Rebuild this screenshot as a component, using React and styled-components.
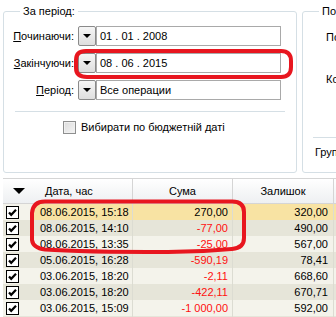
import React from "react";
import styled, { createGlobalStyle } from "styled-components";

const GlobalStyle = createGlobalStyle`
  html, body {
    margin: 0;
    padding: 0;
    background: #ffffff;
  }
`;

const Page = styled.div`
  position: relative;
  width: 336px;
  height: 317px;
  overflow: hidden;
  background: #ffffff;
  font-family: "Liberation Sans", Arial, sans-serif;
  font-size: 11px;
  color: #000;
  padding-left: 3px;
  box-sizing: border-box;
`;

const TopArea = styled.div`
  display: flex;
  gap: 5px;
  height: 169px;
  margin-top: 4px;
`;

const Group = styled.fieldset`
  margin: 0;
  padding: 0;
  border: 1px solid #d5dfe5;
  border-radius: 3px;
  box-sizing: border-box;
  height: 169px;
  width: ${(p) => p.$width}px;
  flex-shrink: 0;
  overflow: hidden;
`;

const Legend = styled.legend`
  margin-left: 16px;
  padding: 0 3px;
  line-height: 14px;
  font-size: 11px;
  white-space: nowrap;
`;

const FieldGrid = styled.div`
  display: grid;
  grid-template-columns: 74px 18px 185px;
  column-gap: 0;
  row-gap: 7px;
  margin-top: 8px;
`;

const Label = styled.label`
  text-align: right;
  padding-right: 4px;
  line-height: 20px;
  white-space: nowrap;
  overflow: hidden;

  u {
    text-decoration: underline;
    text-underline-offset: 1px;
  }
`;

const DropButton = styled.div`
  height: 20px;
  box-sizing: border-box;
  border: 1px solid #8a8a8a;
  border-radius: 2px;
  background: linear-gradient(#f6f6f6, #dedede);
  display: flex;
  align-items: center;
  justify-content: center;

  &::after {
    content: "";
    border-left: 4px solid transparent;
    border-right: 4px solid transparent;
    border-top: 4px solid #000;
  }
`;

const Field = styled.div`
  height: 20px;
  box-sizing: border-box;
  border: 1px solid #a9a9a9;
  background: #fff;
  padding-left: 3px;
  line-height: 18px;
  white-space: nowrap;
`;

const Separator = styled.div`
  height: 1px;
  background: #d5dfe5;
  margin: ${(p) => p.$margin};
`;

const CheckRow = styled.div`
  display: flex;
  align-items: center;
  gap: 5px;
  margin: 9px 0 0 59px;
  line-height: 13px;
`;

const CheckBox = styled.span`
  width: 13px;
  height: 13px;
  box-sizing: border-box;
  border: 1px solid #8e8f8f;
  background: linear-gradient(135deg, #dcdcdc, #f4f4f4);
  box-shadow: inset 0 0 0 1px #f0f0f0;
`;

const SideContent = styled.div`
  display: flex;
  flex-direction: column;
`;

const SideLabel = styled.div`
  white-space: nowrap;
  line-height: 14px;
  margin: ${(p) => p.$margin};
`;

const Table = styled.div`
  margin-top: 5px;
  width: 340px;
`;

const HeaderRow = styled.div`
  display: grid;
  grid-template-columns: 30px 100px 100px 101px 1fr;
  height: 24px;
  border-top: 1px solid #d5d5d5;
  border-bottom: 1px solid #d5d5d5;
  background: linear-gradient(#ffffff 0%, #f7f8f9 45%, #eef0f2 100%);
  box-sizing: content-box;
`;

const HeadCell = styled.div`
  display: flex;
  align-items: center;
  justify-content: ${(p) => p.$align || "center"};
  padding-left: ${(p) => p.$pad || 0}px;
  border-right: ${(p) => (p.$divider ? "1px solid #d5d5d5" : "none")};
  white-space: nowrap;
`;

const SortArrow = styled.span`
  border-left: 6px solid transparent;
  border-right: 6px solid transparent;
  border-top: 6px solid #000;
  margin-left: 2px;
`;

const Row = styled.div`
  display: grid;
  grid-template-columns: 30px 100px 100px 101px 1fr;
  height: 16px;
  background: ${(p) =>
    p.$selected ? "#f8e3a3" : p.$even ? "#e6e5d9" : "#f4f3eb"};
  line-height: 16px;
`;

const CheckCell = styled.div`
  display: flex;
  align-items: center;
  padding-left: 3px;
  background: ${(p) => (p.$selected ? "#f4f3eb" : "transparent")};
`;

const Cell = styled.div`
  text-align: ${(p) => p.$align || "left"};
  padding: ${(p) => p.$pad};
  color: ${(p) => (p.$negative ? "#ff1010" : "#000")};
  border-right: ${(p) => (p.$divider ? "1px solid #dcdcd2" : "none")};
  white-space: nowrap;
`;

const Marks = styled.svg`
  position: absolute;
  left: 0;
  top: 0;
  pointer-events: none;
`;

const Tick = () => (
  <svg width="13" height="13" viewBox="0 0 13 13">
    <rect x="0.5" y="0.5" width="12" height="12" fill="#fff" stroke="#000" />
    <path
      d="M3 6.5 L5.2 8.8 L10 3.8"
      fill="none"
      stroke="#000"
      strokeWidth="2.2"
    />
  </svg>
);

const rows = [
  { date: "08.06.2015, 15:18", sum: "270,00", rest: "320,00", selected: true },
  { date: "08.06.2015, 14:10", sum: "-77,00", rest: "490,00" },
  { date: "08.06.2015, 13:35", sum: "-25,00", rest: "567,00" },
  { date: "05.06.2015, 16:28", sum: "-590,19", rest: "78,41" },
  { date: "03.06.2015, 18:20", sum: "-2,11", rest: "668,60" },
  { date: "03.06.2015, 18:20", sum: "-422,11", rest: "670,71" },
  { date: "03.06.2015, 15:09", sum: "-1 000,00", rest: "592,00" },
  { date: "03.06.2015, 12:41", sum: "-12,00", rest: "1 592,00" },
];

export default function App() {
  return (
    <>
      <GlobalStyle />
      <Page>
        <TopArea>
          <Group $width={294}>
            <Legend>За період:</Legend>
            <FieldGrid>
              <Label>
                <u>П</u>очинаючи:
              </Label>
              <DropButton />
              <Field>01 . 01 . 2008</Field>

              <Label>
                <u>З</u>акінчуючи:
              </Label>
              <DropButton />
              <Field>08 . 06 . 2015</Field>

              <Label>
                <u>П</u>еріод:
              </Label>
              <DropButton />
              <Field>Все операции</Field>
            </FieldGrid>
            <Separator $margin="11px 11px 0 11px" />
            <CheckRow>
              <CheckBox />
              Вибирати по бюджетній даті
            </CheckRow>
          </Group>

          <Group $width={60}>
            <Legend>По</Legend>
            <SideContent>
              <SideLabel $margin="12px 0 0 23px">По</SideLabel>
              <SideLabel $margin="28px 0 0 23px">Ко</SideLabel>
              <Separator $margin="51px 0 0 10px" />
              <SideLabel $margin="7px 0 0 12px">Груп</SideLabel>
            </SideContent>
          </Group>
        </TopArea>

        <Table>
          <HeaderRow>
            <HeadCell>
              <SortArrow />
            </HeadCell>
            <HeadCell $align="flex-start" $pad={12} $divider>
              Дата, час
            </HeadCell>
            <HeadCell $divider>Сума</HeadCell>
            <HeadCell $divider>Залишок</HeadCell>
            <HeadCell />
          </HeaderRow>
          {rows.map((r, i) => (
            <Row key={i} $selected={r.selected} $even={i % 2 === 1}>
              <CheckCell $selected={r.selected}>
                <Tick />
              </CheckCell>
              <Cell $pad="0 0 0 7px" $divider>
                {r.date}
              </Cell>
              <Cell
                $align="right"
                $pad="0 4px 0 0"
                $negative={r.sum.startsWith("-")}
                $divider
              >
                {r.sum}
              </Cell>
              <Cell $align="right" $pad="0 5px 0 0" $divider>
                {r.rest}
              </Cell>
              <Cell />
            </Row>
          ))}
        </Table>

        <Marks width="336" height="317" viewBox="0 0 336 317">
          <path
            d="M86 51 L281 51 Q291 51 291 61 L291 67 Q291 77 281 77 L87 77 Q76 77 76 68 L76 60 Q76 51 86 51 Z"
            fill="none"
            stroke="#e8161f"
            strokeWidth="4"
          />
          <path
            d="M45 201.5 L232 201.5 Q244 201.5 244 212 L244 238 Q244 248 232 249 Q200 252 168 252 Q80 252 45 249.5 Q33 248 32 240 L32 213 Q33 201.5 45 201.5 Z"
            fill="none"
            stroke="#e8161f"
            strokeWidth="4"
          />
        </Marks>
      </Page>
    </>
  );
}
